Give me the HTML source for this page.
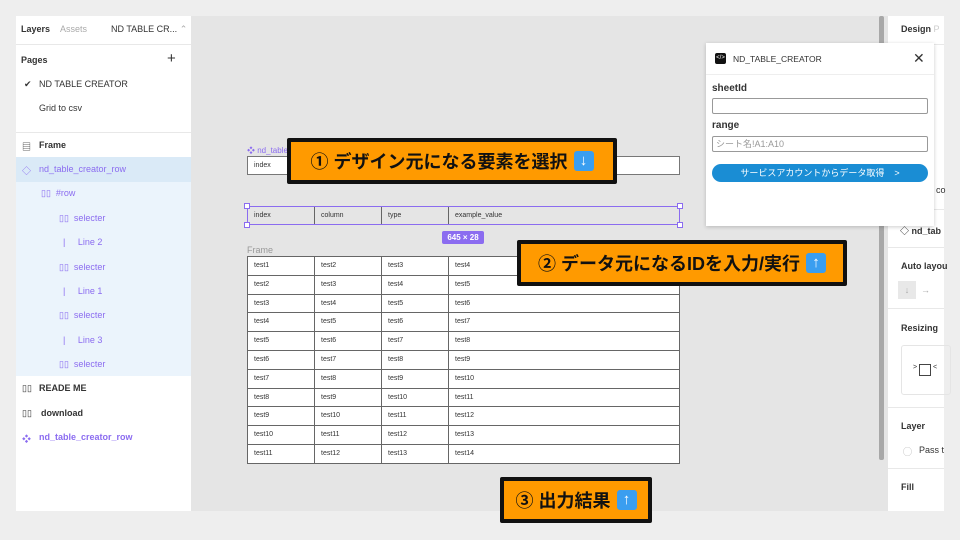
<!DOCTYPE html>
<html><head><meta charset="utf-8"><style>
*{margin:0;padding:0;box-sizing:border-box}
body{width:960px;height:540px;background:#eeeeee;position:relative;overflow:hidden;font-family:"Liberation Sans","Noto Sans CJK JP",sans-serif;}
.a{position:absolute}
.lp{left:16px;top:16px;width:175px;height:495px;background:#fff}
.cv{left:191px;top:16px;width:697px;height:495px;background:#e5e5e5}
.rp{left:888px;top:16px;width:56px;height:495px;background:#fff;overflow:hidden}
.t{font-size:9px;color:#333;white-space:nowrap}
.b{font-weight:bold}
.pu{color:#8b6cf0}
.row{position:absolute;left:247px;width:433px;height:20px;background:#fff;border:1px solid #666;}
.cell{position:absolute;top:0;height:100%;border-right:1px solid #666;font-size:7px;color:#333;padding-left:6px;line-height:17px}
.call{position:absolute;background:#ff9a00;border:4px solid #111;border-radius:2px;font-weight:bold;color:#111;font-size:18px;display:flex;align-items:center;justify-content:center;white-space:nowrap;z-index:5}
.em{display:inline-block;width:20px;height:20px;background:#3a9ef0;border-radius:3px;color:#fff;font-size:15px;line-height:20px;text-align:center;margin-left:6px}
.hr{position:absolute;height:1px;background:#e8e8e8}
.pl{z-index:4}
</style></head><body>
<div class="a lp"></div>
<div class="a cv"></div>
<div class="a rp"></div>

<!-- left panel -->
<div class="a t b" style="left:21px;top:24px">Layers</div>
<div class="a t" style="left:60px;top:24px;color:#aaa">Assets</div>
<div class="a t" style="left:111px;top:24px">ND TABLE CR... <span style="color:#aaa">&#8963;</span></div>
<div class="hr" style="left:16px;top:44px;width:175px"></div>
<div class="a t b" style="left:21px;top:55px">Pages</div>
<div class="a" style="left:167px;top:50px;font-size:15px;color:#333">+</div>
<div class="a t" style="left:24px;top:79px">&#10004;</div>
<div class="a t" style="left:39px;top:79px">ND TABLE CREATOR</div>
<div class="a t" style="left:39px;top:103px">Grid to csv</div>
<div class="hr" style="left:16px;top:132px;width:175px"></div>
<div class="a t" style="left:22px;top:140px">&#9636;</div>
<div class="a t b" style="left:39px;top:140px">Frame</div>
<div class="a" style="left:16px;top:157px;width:175px;height:25px;background:#daeaf7"></div>
<div class="a" style="left:16px;top:182px;width:175px;height:194px;background:#ebf4fc"></div>
<div class="a t pu" style="left:22px;top:164px">&#9671;</div>
<div class="a t pu" style="left:39px;top:164px">nd_table_creator_row</div>
<div class="a t pu" style="left:41px;top:188px">&#9647;&#9647;&nbsp; #row</div>
<div class="a t pu" style="left:59px;top:213px">&#9647;&#9647;&nbsp; selecter</div>
<div class="a t pu" style="left:63px;top:237px">|&nbsp;&nbsp;&nbsp;&nbsp;&nbsp;Line 2</div>
<div class="a t pu" style="left:59px;top:262px">&#9647;&#9647;&nbsp; selecter</div>
<div class="a t pu" style="left:63px;top:286px">|&nbsp;&nbsp;&nbsp;&nbsp;&nbsp;Line 1</div>
<div class="a t pu" style="left:59px;top:310px">&#9647;&#9647;&nbsp; selecter</div>
<div class="a t pu" style="left:63px;top:335px">|&nbsp;&nbsp;&nbsp;&nbsp;&nbsp;Line 3</div>
<div class="a t pu" style="left:59px;top:359px">&#9647;&#9647;&nbsp; selecter</div>
<div class="a t" style="left:22px;top:383px">&#9647;&#9647;</div>
<div class="a t b" style="left:39px;top:383px">READE ME</div>
<div class="a t" style="left:22px;top:408px">&#9647;&#9647;</div>
<div class="a t b" style="left:41px;top:408px">download</div>
<div class="a t pu b" style="left:22px;top:432px">&#10070;</div>
<div class="a t pu b" style="left:39px;top:432px">nd_table_creator_row</div>

<!-- canvas -->
<div class="a" style="left:879px;top:16px;width:5px;height:444px;background:#a8a8a8;border-radius:2px"></div>
<div class="a t pu" style="left:247px;top:145px;font-size:8px">&#10070; nd_table</div>
<div class="row" style="top:156px;height:19px;border-color:#777"><div class="cell" style="left:0;width:66px;border:none">index</div></div>

<div class="row" style="top:206px;height:19px;border-color:#8b6cf0;background:#e5e5e5">
<div class="cell" style="left:0;width:67px">index</div>
<div class="cell" style="left:67px;width:67px">column</div>
<div class="cell" style="left:134px;width:67px">type</div>
<div class="cell" style="left:201px;width:100px;border:none">example_value</div>
</div>
<div class="a" style="left:244px;top:203px;width:6px;height:6px;background:#fff;border:1px solid #8b6cf0"></div>
<div class="a" style="left:677px;top:203px;width:6px;height:6px;background:#fff;border:1px solid #8b6cf0"></div>
<div class="a" style="left:244px;top:222px;width:6px;height:6px;background:#fff;border:1px solid #8b6cf0"></div>
<div class="a" style="left:677px;top:222px;width:6px;height:6px;background:#fff;border:1px solid #8b6cf0"></div>
<div class="a" style="left:442px;top:231px;width:42px;height:13px;background:#8b6cf0;border-radius:2px;color:#fff;font-size:8px;line-height:13px;text-align:center;font-weight:bold">645 × 28</div>
<div class="a t" style="left:247px;top:245px;color:#999">Frame</div>

<div id="tb"></div>
<script>
var h='';for(var i=0;i<11;i++){var t=Math.round(256+i*18.8);var n=i+1;
h+='<div class="row" style="top:'+t+'px"><div class="cell" style="left:0;width:67px">test'+n+'</div><div class="cell" style="left:67px;width:67px">test'+(n+1)+'</div><div class="cell" style="left:134px;width:67px">test'+(n+2)+'</div><div class="cell" style="left:201px;width:100px;border:none">test'+(n+3)+'</div></div>';}
document.getElementById('tb').outerHTML=h;
</script>

<!-- right panel -->
<div class="a t b" style="left:901px;top:24px">Design <span style="color:#ccc;font-weight:normal">P</span></div>
<div class="hr" style="left:888px;top:44px;width:56px"></div>
<div class="a t" style="left:936px;top:185px">co</div>
<div class="hr" style="left:888px;top:209px;width:56px"></div>
<div class="a t b" style="left:900px;top:224px">&#9671; nd_tab</div>
<div class="hr" style="left:888px;top:247px;width:56px"></div>
<div class="a t b" style="left:901px;top:261px">Auto layou</div>
<div class="a" style="left:898px;top:281px;width:18px;height:18px;background:#e8e8e8;color:#aaa;font-size:9px;text-align:center;line-height:18px">&#8595;</div>
<div class="a t" style="left:921px;top:285px;color:#aaa">&#8594;</div>
<div class="hr" style="left:888px;top:308px;width:56px"></div>
<div class="a t b" style="left:901px;top:323px">Resizing</div>
<div class="a" style="left:901px;top:345px;width:50px;height:50px;border:1px solid #e5e5e5;border-radius:3px"></div>
<div class="a" style="left:919px;top:364px;width:12px;height:12px;border:1px solid #444"></div>
<div class="a t" style="left:913px;top:364px;font-size:7px">&gt;</div>
<div class="a t" style="left:933px;top:364px;font-size:7px">&lt;</div>
<div class="hr" style="left:888px;top:407px;width:56px"></div>
<div class="a t b" style="left:901px;top:421px">Layer</div>
<div class="a t" style="left:903px;top:445px;color:#aaa">&#9711;</div>
<div class="a t" style="left:919px;top:445px">Pass t</div>
<div class="hr" style="left:888px;top:468px;width:56px"></div>
<div class="a t b" style="left:901px;top:482px">Fill</div>

<!-- plugin -->
<div class="a pl" style="left:706px;top:43px;width:228px;height:183px;background:#fff;box-shadow:0 1px 4px rgba(0,0,0,.2)">
<div class="a" style="left:9px;top:10px;width:11px;height:11px;background:#111;border-radius:2px;color:#fff;font-size:6px;line-height:11px;text-align:center">&lt;/&gt;</div>
<div class="a t" style="left:27px;top:11px;font-size:8.5px">ND_TABLE_CREATOR</div>
<div class="a" style="left:207px;top:7px;font-size:14px;color:#333">&#x2715;</div>
<div class="hr" style="left:0;top:31px;width:228px;background:#eee"></div>
<div class="a t b" style="left:6px;top:40px;font-size:10px">sheetId</div>
<div class="a" style="left:6px;top:55px;width:216px;height:16px;border:1px solid #999;border-radius:2px"></div>
<div class="a t b" style="left:6px;top:77px;font-size:10px">range</div>
<div class="a" style="left:6px;top:93px;width:216px;height:16px;border:1px solid #999;border-radius:2px;font-size:9px;color:#999;padding-left:3px;line-height:14px">シート名!A1:A10</div>
<div class="a" style="left:6px;top:121px;width:216px;height:18px;background:#1a8dd4;border-radius:9px;color:#fff;font-size:9px;line-height:18px;text-align:center">サービスアカウントからデータ取得 &nbsp;&nbsp;&nbsp;&gt;</div>
</div>

<!-- callouts -->
<div class="call" style="left:287px;top:138px;width:330px;height:46px">① デザイン元になる要素を選択<span class="em">&#8595;</span></div>
<div class="call" style="left:517px;top:240px;width:330px;height:46px">② データ元になるIDを入力/実行<span class="em">&#8593;</span></div>
<div class="call" style="left:500px;top:477px;width:152px;height:46px">③ 出力結果<span class="em">&#8593;</span></div>
</body></html>
